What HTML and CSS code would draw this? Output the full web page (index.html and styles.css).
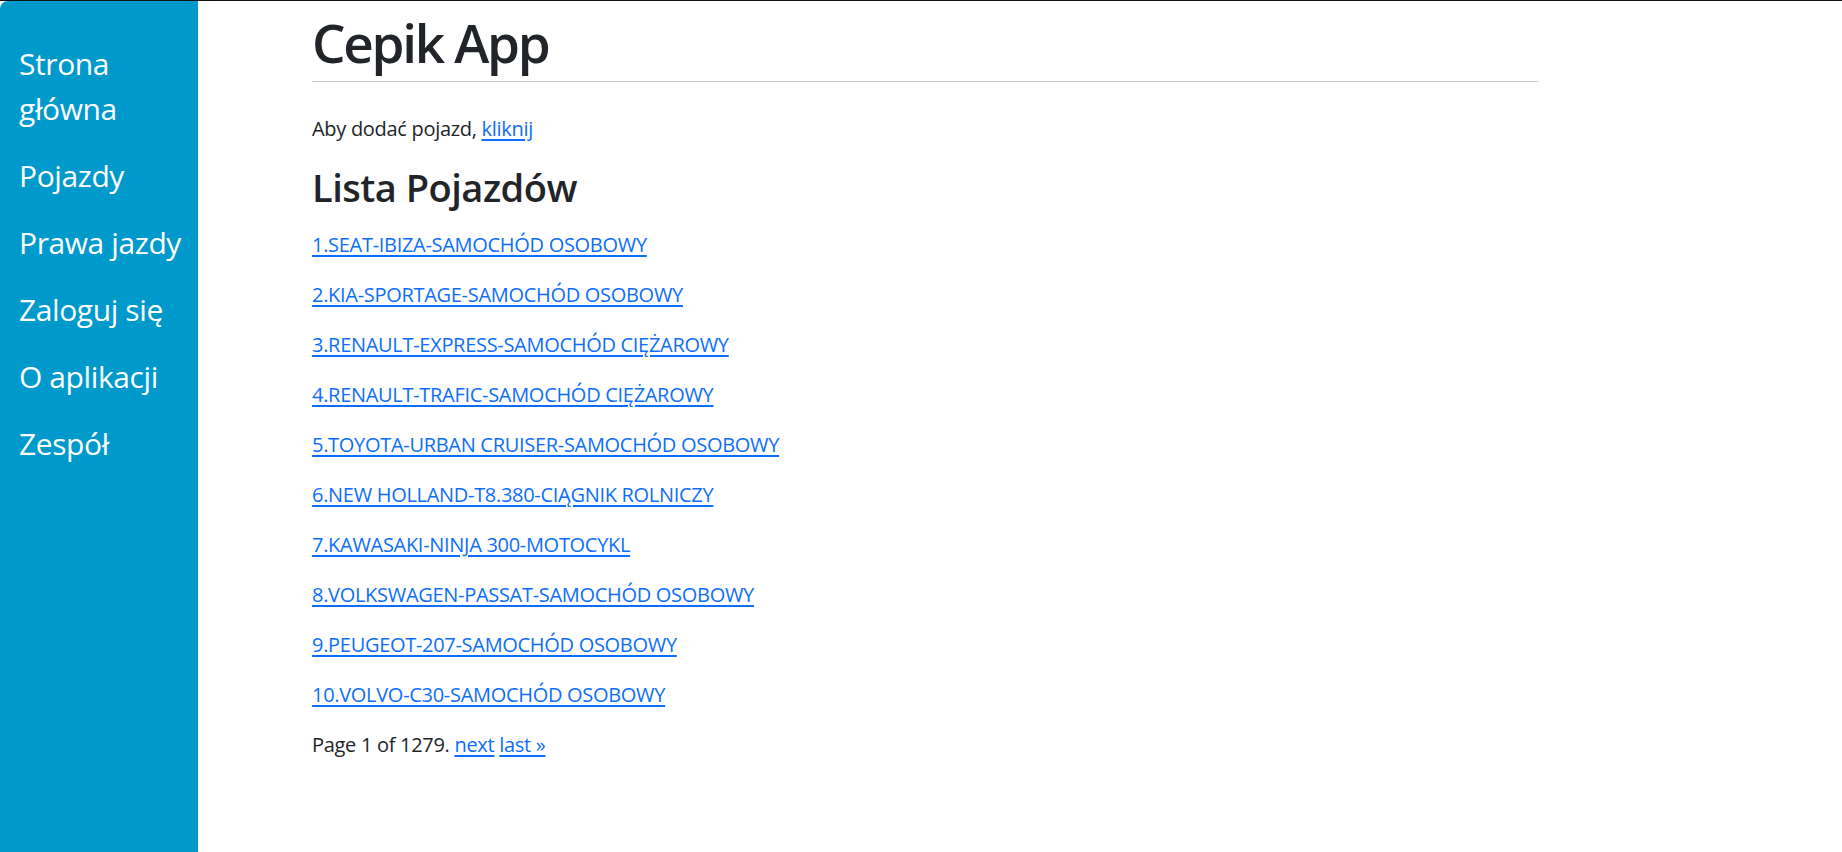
FILE: index.html
```html
<!DOCTYPE html>
<html lang="pl">
<head>
<meta charset="utf-8">
<title>Cepik App</title>
<link rel="stylesheet" href="styles.css">
</head>
<body>
<div class="app">
  <nav class="sidebar">
    <ul class="nav">
      <li><a href="#">Strona główna</a></li>
      <li><a href="#">Pojazdy</a></li>
      <li><a href="#">Prawa jazdy</a></li>
      <li><a href="#">Zaloguj się</a></li>
      <li><a href="#">O aplikacji</a></li>
      <li><a href="#">Zespół</a></li>
    </ul>
  </nav>
  <main class="main">
    <div class="content">
      <h1 class="title">Cepik App</h1>
      <hr class="rule">
      <p class="text">Aby dodać pojazd, <a href="#" class="link">kliknij</a></p>
      <h2 class="subtitle">Lista Pojazdów</h2>
      <p class="text"><a href="#" class="link">1.SEAT-IBIZA-SAMOCHÓD OSOBOWY</a></p>
      <p class="text"><a href="#" class="link">2.KIA-SPORTAGE-SAMOCHÓD OSOBOWY</a></p>
      <p class="text"><a href="#" class="link">3.RENAULT-EXPRESS-SAMOCHÓD CIĘŻAROWY</a></p>
      <p class="text"><a href="#" class="link">4.RENAULT-TRAFIC-SAMOCHÓD CIĘŻAROWY</a></p>
      <p class="text"><a href="#" class="link">5.TOYOTA-URBAN CRUISER-SAMOCHÓD OSOBOWY</a></p>
      <p class="text"><a href="#" class="link">6.NEW HOLLAND-T8.380-CIĄGNIK ROLNICZY</a></p>
      <p class="text"><a href="#" class="link">7.KAWASAKI-NINJA 300-MOTOCYKL</a></p>
      <p class="text"><a href="#" class="link">8.VOLKSWAGEN-PASSAT-SAMOCHÓD OSOBOWY</a></p>
      <p class="text"><a href="#" class="link">9.PEUGEOT-207-SAMOCHÓD OSOBOWY</a></p>
      <p class="text"><a href="#" class="link">10.VOLVO-C30-SAMOCHÓD OSOBOWY</a></p>
      <p class="text">Page 1 of 1279. <a href="#" class="link">next</a> <a href="#" class="link">last »</a></p>
    </div>
  </main>
</div>
</body>
</html>
```
FILE: styles.css
```css
html, body {
  margin: 0;
  padding: 0;
  height: 100%;
}
body {
  font-family: "Open Sans", "Noto Sans", sans-serif;
  color: #212529;
  background: #fff;
  border-top: 1px solid #111;
  box-sizing: border-box;
}
.app {
  display: flex;
  min-height: 851px;
}
.sidebar {
  width: 198px;
  flex: 0 0 198px;
  background: #0099cc;
  border-top-left-radius: 8px;
  padding-top: 29px;
  box-sizing: border-box;
}
.nav {
  list-style: none;
  margin: 0;
  padding: 0 10px 0 19px;
}
.nav li {
  padding: 11px 0;
}
.nav a {
  color: #fff;
  text-decoration: none;
  font-size: 30px;
  line-height: 45px;
  letter-spacing: -0.4px;
}
.main {
  flex: 1;
  padding-left: 114px;
}
.content {
  width: 1226px;
}
.title {
  font-size: 53px;
  font-weight: 600;
  line-height: 65px;
  letter-spacing: -2.3px;
  margin: 9px 0 0;
}
.rule {
  margin: 6px 0 0;
  border: 0;
  border-top: 1px solid #cccccc;
  height: 0;
}
.text {
  font-size: 20px;
  line-height: 30px;
  letter-spacing: -0.3px;
  margin: 32px 0 20px;
}
.subtitle + .text ~ .text,
.subtitle + .text {
  margin-top: 0;
}
.subtitle {
  font-size: 38px;
  font-weight: 600;
  line-height: 46px;
  letter-spacing: -0.5px;
  margin: 0 0 20px;
}
.link {
  color: #0d6efd;
  text-decoration: underline;
  text-decoration-thickness: 2px;
  text-underline-offset: 3px;
}
```
